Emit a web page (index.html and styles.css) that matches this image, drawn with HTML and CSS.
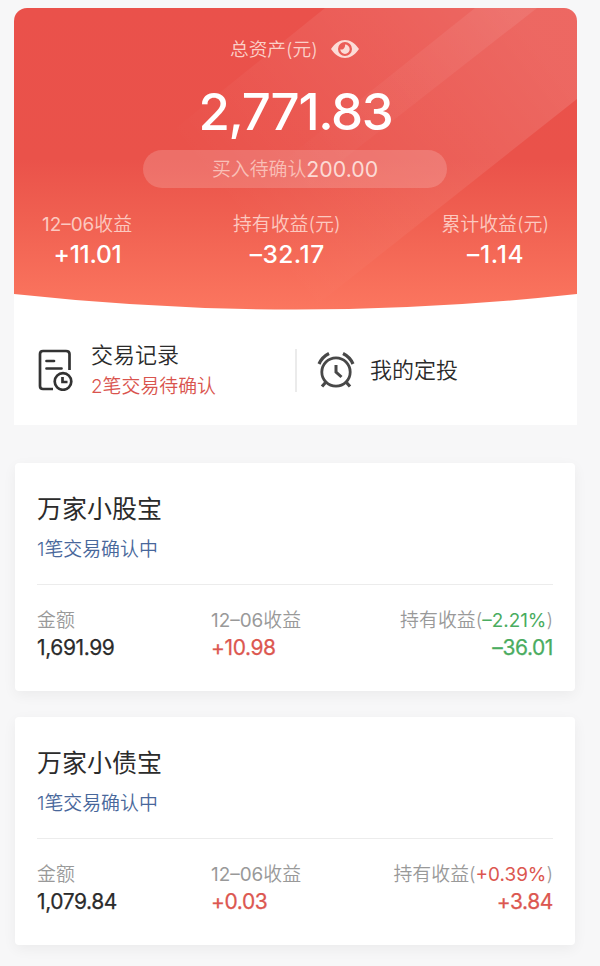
FILE: index.html
```html
<!DOCTYPE html>
<html lang="zh-CN">
<head>
<meta charset="utf-8">
<title>总资产</title>
<link rel="stylesheet" href="styles.css">
</head>
<body>
<main class="page">
  <section class="summary">
    <div class="hero">
      <svg class="hero-bg" viewBox="0 0 563 302" aria-hidden="true">
        <defs>
          <linearGradient id="base" x1="0" y1="0" x2="0" y2="1">
            <stop offset="0" stop-color="#ea514b"/>
            <stop offset=".5" stop-color="#ea524a"/>
            <stop offset=".7" stop-color="#f06051"/>
            <stop offset="1" stop-color="#fb765f"/>
          </linearGradient>
          <linearGradient id="wide" gradientUnits="userSpaceOnUse" x1="500" y1="0" x2="230" y2="217">
            <stop offset="0" stop-color="#fff" stop-opacity=".13"/>
            <stop offset="1" stop-color="#fff" stop-opacity="0"/>
          </linearGradient>
          <linearGradient id="beam" gradientUnits="userSpaceOnUse" x1="500" y1="0" x2="280" y2="175">
            <stop offset="0" stop-color="#fff" stop-opacity=".08"/>
            <stop offset="1" stop-color="#fff" stop-opacity="0"/>
          </linearGradient>
          <clipPath id="dome"><path d="M0 13A13 13 0 0 1 13 0H550A13 13 0 0 1 563 13V286Q421 301.500 281.500 301.500T0 286Z"/></clipPath>
        </defs>
        <g clip-path="url(#dome)">
          <rect width="563" height="302" fill="url(#base)"/>
          <path d="M311 0H563V91L290 307H-70Z" fill="url(#wide)"/>
          <path d="M461 0H523L280 190H223Z" fill="url(#beam)"/>
        </g>
      </svg>
      <div class="total-label"><span>总资产(元)</span>
        <svg class="eye" viewBox="0 0 28 18" aria-hidden="true">
          <path fill-rule="evenodd" d="M0 9C4 3 9 0 14 0S24 3 28 9C24 15 19 18 14 18S4 15 0 9ZM14 2A7 7 0 1 0 14 16A7 7 0 1 0 14 2Z"/>
          <path d="M14 4.500A4.700 4.700 0 1 1 9.300 9.200C11.500 10.500 14.600 8 14 4.500Z"/>
        </svg>
      </div>
      <div class="total">2,771.83</div>
      <div class="pending"><span>买入待确认</span><b>200.00</b></div>
      <div class="stats">
        <div class="stat"><span class="stat-label"><i>12–06</i>收益</span><span class="stat-value">+11.01</span></div>
        <div class="stat"><span class="stat-label">持有收益(元)</span><span class="stat-value held">–32.17</span></div>
        <div class="stat"><span class="stat-label">累计收益(元)</span><span class="stat-value overall">–1.14</span></div>
      </div>
    </div>
    <nav class="actions">
      <a class="action records">
        <svg class="doc-icon" viewBox="0 0 36 42" aria-hidden="true">
          <path d="M15 40H5Q2 40 2 37V5Q2 2 5 2H28Q31.500 2 31.500 5V21"/>
          <path d="M8.500 12H16M8.500 19.500H23.500" stroke-linecap="round"/>
          <circle cx="25" cy="32.500" r="8.300"/><path d="M24.500 28V33H29.500"/>
        </svg>
        <span class="action-text"><span class="action-title">交易记录</span><span class="action-note">2笔交易待确认</span></span>
      </a>
      <a class="action plan">
        <svg class="clock-icon" viewBox="0 0 38 38" aria-hidden="true">
          <circle cx="19" cy="21" r="14.200"/>
          <path d="M2 13Q5 6 12 2.500M26 2.500Q33 6 36 13M9 31L5 35.500M29 31L33 35.500" stroke-width="3.200"/>
          <path d="M19 14V21L24.500 26" stroke-width="3"/>
        </svg>
        <span class="action-title">我的定投</span>
      </a>
    </nav>
  </section>

  <section class="fund">
    <h2>万家小股宝</h2>
    <p class="status">1笔交易确认中</p>
    <div class="figures">
      <div class="figure"><span class="label">金额</span><span class="value">1,691.99</span></div>
      <div class="figure"><span class="label"><i>12–06</i>收益</span><span class="value up">+10.98</span></div>
      <div class="figure"><span class="label">持有收益(<i class="down">–2.21%</i>)</span><span class="value down">–36.01</span></div>
    </div>
  </section>

  <section class="fund">
    <h2>万家小债宝</h2>
    <p class="status">1笔交易确认中</p>
    <div class="figures">
      <div class="figure"><span class="label">金额</span><span class="value">1,079.84</span></div>
      <div class="figure"><span class="label"><i>12–06</i>收益</span><span class="value up">+0.03</span></div>
      <div class="figure"><span class="label">持有收益(<i class="up">+0.39%</i>)</span><span class="value up">+3.84</span></div>
    </div>
  </section>
</main>
</body>
</html>
```
FILE: styles.css
```css
* { box-sizing: border-box; }
body {
  margin: 0;
  background: #f7f7f8;
  color: #2b2b2b;
  font-family: Inter, "Noto Sans CJK SC", sans-serif;
  font-size: 18.9px;
  font-weight: 350;
}
i { font-style: normal; font-weight: 400; }
.page { height: 966px; padding: 8px 25px 0 15px; overflow: hidden; }

.summary { width: 563px; height: 417px; margin: 0 0 38px -1px; background: #fff; border-radius: 13px 13px 0 0; }
.hero { position: relative; height: 302px; padding-top: 27px; color: #fff; }
.hero-bg { position: absolute; inset: 0; width: 563px; height: 302px; }
.hero > div { position: relative; }
.total-label { display: flex; align-items: center; gap: 13px; height: 28px; padding-left: 216px; color: #fbd0c9; font-size: 18.7px; line-height: 29px; }
.eye { width: 28px; height: 18px; fill: #fcdcd7; }
.total { height: 60px; margin-top: 19px; line-height: 60px; text-align: center; font-size: 51px; font-weight: 500; letter-spacing: -1.35px; }
.pending { display: flex; justify-content: center; width: 304px; height: 38px; margin: 8px auto 0 129px; border-radius: 19px; background: rgba(255,255,255,.17); color: #f9bfb7; line-height: 39px; }
.pending b { color: #fcdad5; font-weight: 400; font-size: 21.3px; }
.stats { display: flex; justify-content: space-between; margin-top: 23px; padding: 0 28px; }
.stat { display: flex; flex-direction: column; align-items: center; }
.stat-label { height: 27px; color: #fcc9c0; line-height: 28px; }
.stat-value { height: 32px; padding-left: 1px; line-height: 32px; font-size: 24.500px; font-weight: 500; letter-spacing: -.25px; }
.held { letter-spacing: .5px; }
.overall { letter-spacing: .7px; }

.actions { display: flex; align-items: center; height: 115px; padding-top: 5px; }
.action { display: flex; align-items: center; }
.records { width: 283px; height: 43px; padding-left: 24px; border-right: 2px solid #ebebeb; }
.plan { padding-left: 20px; gap: 15px; }
.doc-icon { width: 36px; height: 42px; margin-right: 17px; fill: none; stroke: #333; stroke-width: 2.700; }
.clock-icon { width: 38px; height: 38px; fill: none; stroke: #484848; stroke-width: 2.800; }
.action-text { display: flex; flex-direction: column; }
.action-title { font-size: 22px; line-height: 32px; }
.action-note { color: #d9544e; line-height: 31px; }

.fund { height: 228px; margin-bottom: 26px; padding: 29px 22px 0; border-radius: 4px; background: #fff; box-shadow: 0 4px 14px rgba(0,0,0,.05); }
h2 { margin: 0; height: 34px; font-size: 25px; font-weight: 400; line-height: 34px; }
.status { height: 30px; margin: 8px 0 20px; color: #48679b; line-height: 31px; }
.figures { display: grid; grid-template-columns: 174px 1fr 1fr; padding-top: 21px; border-top: 1px solid #ececec; }
.figure { display: flex; flex-direction: column; white-space: nowrap; }
.figure:last-child { align-items: flex-end; }
.label { height: 28px; color: #999; line-height: 29px; }
.value { height: 28px; line-height: 28px; font-size: 21px; font-weight: 400; letter-spacing: -.4px; -webkit-text-stroke: .25px currentColor; }
.up { color: #dc5750; }
.down { color: #4aac60; }
```
